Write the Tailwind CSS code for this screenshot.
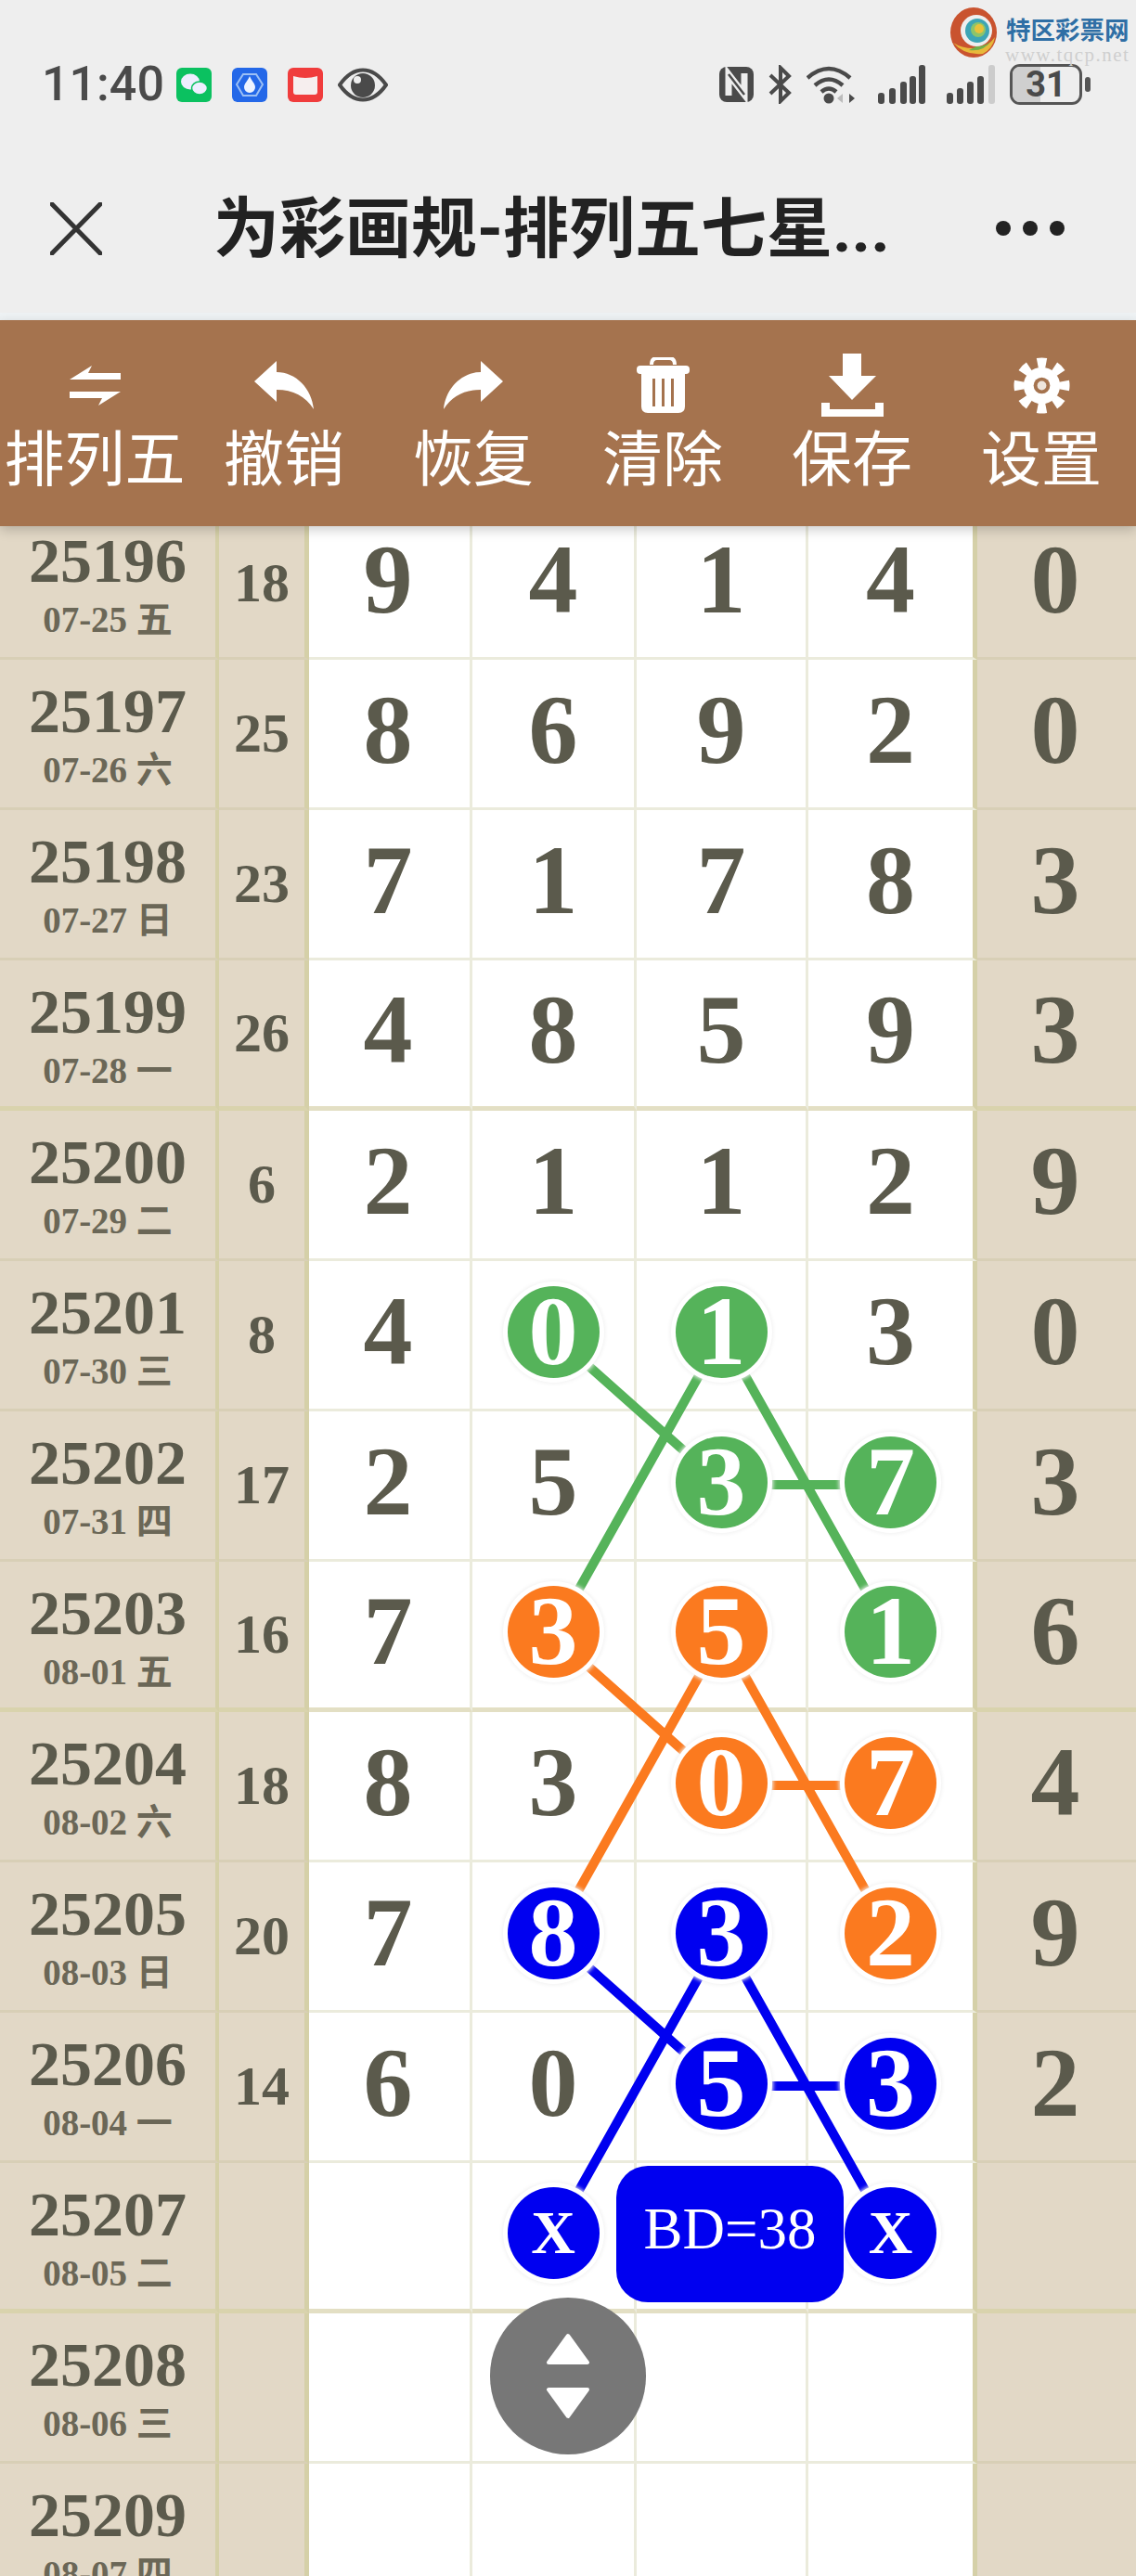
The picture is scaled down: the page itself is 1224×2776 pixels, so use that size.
<!DOCTYPE html>
<html lang="zh-CN">
<head>
    <meta charset="UTF-8" />
    <meta name="viewport" content="width=device-width, initial-scale=1.0" />
    <title>为彩画规-排列五七星</title>
    <script src="https://cdn.jsdelivr.net/npm/@tailwindcss/browser@4"></script>
</head>

<body class="relative w-[1224px] h-[2776px] overflow-hidden bg-white font-['Liberation_Serif','Noto_Sans_CJK_SC',serif]">
    <!-- Status bar + title -->
    <div class="h-[337px] bg-[#eeeeee] pt-[69px] font-['Roboto','Noto_Sans_CJK_SC',sans-serif]">
        <div class="flex items-center justify-between h-[44px] pl-[45px] pr-[49px]">
            <div class="flex items-center">
                <span class="w-[145px] text-[52px] leading-none font-medium text-[#4a4a4a]">11:40</span>
                <svg class="w-[38px] h-[37px]" viewBox="0 0 38 37"><rect width="38" height="37" rx="6" fill="#0bc160"/><ellipse cx="15" cy="15" rx="10" ry="8.5" fill="#eef"/><ellipse cx="25" cy="22" rx="8.5" ry="7" fill="#eef" stroke="#0bc160" stroke-width="1.5"/></svg>
                <svg class="w-[38px] h-[37px] ml-[22px]" viewBox="0 0 38 37"><rect width="38" height="37" rx="6" fill="#2468e8"/><path d="M12 7H26L33 18L26 30H12L5 18Z" fill="none" stroke="#9cc0f5" stroke-width="2"/><path d="M19 9C21 14 25 17 25 21A6 6 0 0 1 13 21C13 17 17 14 19 9Z" fill="#eef4ff"/></svg>
                <svg class="w-[38px] h-[37px] ml-[22px]" viewBox="0 0 38 37"><rect width="38" height="37" rx="6" fill="#f03c3c"/><path d="M6 9Q19 13 32 9V26Q32 29 29 29H9Q6 29 6 26Z" fill="#f6eeee"/></svg>
                <svg class="w-[54px] h-[37px] ml-[16px]" viewBox="0 0 54 37"><path d="M2 18.5C10 7 18 2.5 27 2.5S44 7 52 18.5C44 30 36 34.500 27 34.500S10 30 2 18.5Z" fill="none" stroke="#4a4a4a" stroke-width="4"/><circle cx="27" cy="19" r="13" fill="#4a4a4a"/><circle cx="21" cy="13" r="4" fill="#eeeeee"/></svg>
            </div>
            <div class="flex items-center">
                <svg class="w-[37px] h-[38px]" viewBox="0 0 37 38"><rect width="37" height="38" rx="8" fill="#4a4a4a"/><path d="M10 31V8L27 30V7" fill="none" stroke="#eeeeee" stroke-width="7"/><path d="M10 8L27 30" stroke="#4a4a4a" stroke-width="2.500"/></svg>
                <svg class="w-[25px] h-[42px] ml-[16px]" viewBox="0 0 25 42"><path d="M2 11L22 30L13 39V3L22 12L2 31" fill="none" stroke="#4a4a4a" stroke-width="4"/></svg>
                <svg class="w-[53px] h-[42px] ml-[16px]" viewBox="0 0 53 42"><path d="M1 14Q24 -6 47 14M9 22Q24 9 39 22M16 29Q24 22 32 29" fill="none" stroke="#4a4a4a" stroke-width="4.500"/><circle cx="24" cy="36" r="5.500" fill="#4a4a4a"/><path d="M33 36L39 31V41Z" fill="#bbbbbb"/><path d="M46 31L52 36L46 41Z" fill="#4a4a4a"/></svg>
                <svg class="w-[51px] h-[42px] ml-[24px]" viewBox="0 0 51 42"><g fill="#4a4a4a"><rect x="0" y="30" width="7" height="12" rx="3"/><rect x="12" y="25" width="7" height="17" rx="3"/><rect x="24" y="18" width="7" height="24" rx="3"/><rect x="44" y="0" width="7" height="42" rx="3"/><rect x="34" y="12" width="7" height="30" rx="3"/></g></svg>
                <svg class="w-[52px] h-[42px] ml-[23px]" viewBox="0 0 52 42"><g fill="#4a4a4a"><rect x="0" y="30" width="7" height="12" rx="3"/><rect x="11" y="25" width="7" height="17" rx="3"/><rect x="22" y="18" width="7" height="24" rx="3"/><rect x="33" y="12" width="7" height="30" rx="3"/></g><rect x="45" y="0" width="7" height="42" rx="3" fill="#cccccc"/></svg>
                <div class="relative flex items-center justify-center w-[78px] h-[44px] ml-[16px] rounded-[11px] border-[3px] border-[#555555] overflow-hidden">
                    <div class="absolute left-0 top-0 bottom-0 w-[30px] bg-[#cfcfcf]"></div>
                    <span class="relative text-[38px] leading-none font-bold text-[#4a4a4a]">31</span>
                </div>
                <div class="w-[6px] h-[16px] ml-[3px] rounded-full bg-[#555555]"></div>
            </div>
        </div>
        <div class="flex items-center mt-[97px] h-[72px]">
            <svg class="w-[56px] h-[57px] ml-[54px]" viewBox="0 0 56 57"><path d="M2 2L54 55M54 2L2 55" stroke="#333333" stroke-width="5" stroke-linecap="round"/></svg>
            <div class="ml-[120px] w-[843px] text-[71px] leading-none font-bold text-[#222222] whitespace-nowrap">为彩画规-排列五七星...</div>
            <div class="flex gap-[13px]">
                <div class="w-[16px] h-[16px] rounded-full bg-[#222222]"></div>
                <div class="w-[16px] h-[16px] rounded-full bg-[#222222]"></div>
                <div class="w-[16px] h-[16px] rounded-full bg-[#222222]"></div>
            </div>
        </div>
    </div>
    <div class="h-[8px] bg-[#eef2f4]"></div>

    <!-- Toolbar -->
    <div class="relative z-20 grid grid-cols-6 h-[222px] pt-[36px] bg-[#a5734e] text-white text-[65px] leading-none font-['Noto_Sans_CJK_SC',sans-serif] shadow-[0_4px_12px_rgba(0,0,0,0.2)]">
        <div class="flex flex-col items-center">
            <div class="flex items-center h-[68px]"><svg class="w-[55px] h-[43px]" viewBox="0 0 55 43"><path d="M0 15L24 0L20 8H55V15ZM0 28H55L31 43L35 35H0Z" fill="white"/></svg></div>
            <span class="mt-[9px] whitespace-nowrap">排列五</span>
        </div>
        <div class="flex flex-col items-center">
            <div class="flex items-center h-[68px]"><svg class="w-[64px] h-[52px]" viewBox="0 0 64 52"><path d="M0 22L24 0V12C45 12 62 30 64 52C55 38 42 31 24 31V44Z" fill="white"/></svg></div>
            <span class="mt-[9px] whitespace-nowrap">撤销</span>
        </div>
        <div class="flex flex-col items-center">
            <div class="flex items-center h-[68px]"><svg class="w-[64px] h-[52px] -scale-x-100" viewBox="0 0 64 52"><path d="M0 22L24 0V12C45 12 62 30 64 52C55 38 42 31 24 31V44Z" fill="white"/></svg></div>
            <span class="mt-[9px] whitespace-nowrap">恢复</span>
        </div>
        <div class="flex flex-col items-center">
            <div class="flex items-center h-[68px]"><svg class="w-[57px] h-[60px]" viewBox="0 0 57 60"><path d="M16 8Q16 1 22 1H35Q41 1 41 8" fill="none" stroke="white" stroke-width="4"/><rect x="0" y="9" width="57" height="9" rx="4" fill="white"/><path d="M5 18H52V53Q52 60 45 60H12Q5 60 5 53Z" fill="white"/><rect x="17" y="23" width="3" height="30" fill="#a5734e"/><rect x="27" y="23" width="3" height="30" fill="#a5734e"/><rect x="37" y="23" width="3" height="30" fill="#a5734e"/></svg></div>
            <span class="mt-[9px] whitespace-nowrap">清除</span>
        </div>
        <div class="flex flex-col items-center">
            <div class="flex items-center h-[68px]"><svg class="w-[67px] h-[68px]" viewBox="0 0 67 68"><path d="M23 0H43V24H59L33 50L8 24H23Z" fill="white"/><path d="M0 53H9V60H58V53H67V68H0Z" fill="white"/></svg></div>
            <span class="mt-[9px] whitespace-nowrap">保存</span>
        </div>
        <div class="flex flex-col items-center">
            <div class="flex items-center h-[68px]"><svg class="w-[61px] h-[61px]" viewBox="-31 -31 62 62"><circle r="20" fill="white"/><circle r="25" fill="none" stroke="white" stroke-width="11" pathLength="16" stroke-dasharray="1 1" stroke-dashoffset="0.500"/><circle r="9" fill="#a5734e"/><circle r="5" fill="#eee5dc"/></svg></div>
            <span class="mt-[9px] whitespace-nowrap">设置</span>
        </div>
    </div>

    <!-- Chart rows, filled in below -->
    <div id="chart" class="-mt-[18px]"></div>

    <!-- Connecting lines -->
    <svg class="absolute top-0 left-0 w-[1224px] h-[2776px]" viewBox="0 0 1224 2776" stroke-width="10" fill="none">
        <g stroke="#55b35a">
            <path d="M596 1438L778 1600M778 1438L596 1762M778 1438L960 1762M778 1600H960" />
        </g>
        <g stroke="#fb7a1f">
            <path d="M596 1762L778 1924M778 1762L596 2086M778 1762L960 2086M778 1924H960" />
        </g>
        <g stroke="#0000f0">
            <path d="M596 2086L778 2248M778 2086L596 2410M778 2086L960 2410M778 2248H960" />
        </g>
    </svg>

    <div class="absolute left-[664px] top-[2334px] z-20 flex justify-center w-[245px] h-[147px] pt-[37px] rounded-[34px] bg-[#0000f0] text-white text-[63px] leading-none">BD=38</div>

    <div class="absolute left-[528px] top-[2476px] z-30 flex items-center justify-center w-[168px] h-[169px] rounded-full bg-[#777777]">
        <svg class="w-[48px] h-[93px]" viewBox="0 0 48 93"><path d="M24 3L45 32H3ZM3 61H45L24 90Z" fill="white" stroke="white" stroke-width="4" stroke-linejoin="round"/></svg>
    </div>

    <script>
        const rows = [
            ['25196', '07-25 五', '18', '9', '4', '1', '4', '0'],
            ['25197', '07-26 六', '25', '8', '6', '9', '2', '0'],
            ['25198', '07-27 日', '23', '7', '1', '7', '8', '3'],
            ['25199', '07-28 一', '26', '4', '8', '5', '9', '3'],
            ['25200', '07-29 二', '6', '2', '1', '1', '2', '9'],
            ['25201', '07-30 三', '8', '4', '0g', '1g', '3', '0'],
            ['25202', '07-31 四', '17', '2', '5', '3g', '7g', '3'],
            ['25203', '08-01 五', '16', '7', '3o', '5o', '1g', '6'],
            ['25204', '08-02 六', '18', '8', '3', '0o', '7o', '4'],
            ['25205', '08-03 日', '20', '7', '8b', '3b', '2o', '9'],
            ['25206', '08-04 一', '14', '6', '0', '5b', '3b', '2'],
            ['25207', '08-05 二', '', '', 'Xb', '', 'Xb', ''],
            ['25208', '08-06 三', '', '', '', '', '', ''],
            ['25209', '08-07 四', '', '', '', '', '', '']
        ];
        const dots = {
            g: 'bg-[#55b35a]',
            o: 'bg-[#fb7a1f]',
            b: 'bg-[#0000f0]'
        };

        function ball(v) {
            if (v.length < 2) return v;
            const size = v[0] === 'X' ? 'text-[66px]' : 'text-[106px]';
            return `<div class="relative z-10 flex items-center justify-center w-[99px] h-[99px] rounded-full text-white ${size} ${dots[v[1]]} shadow-[0_0_0_5px_#ffffff,0_0_4px_6px_#f1f1f1]">${v[0]}</div>`;
        }

        document.getElementById('chart').innerHTML = rows.map((r, i) => {
            const thick = i % 4 === 3;
            const tan = thick ? 'border-b-[5px] border-b-[#d9d3ad]' : 'border-b-[3px] border-b-[#d8cfb6]';
            const white = thick ? 'border-b-[5px] border-b-[#e3dfc4]' : 'border-b-[3px] border-b-[#ebebdc]';
            const num = 'flex items-center justify-center pb-[7px] text-[106px] leading-none font-bold text-[#5b5a4c]';
            return `<div class="flex h-[162px]">
                <div class="w-[236px] flex flex-col items-center pt-[21px] bg-[#e2d8c6] border-r-[4px] border-r-[#d5d0a8] ${tan} font-bold">
                    <div class="text-[68px] leading-none text-[#5b5a4c]">${r[0]}</div>
                    <div class="mt-[10px] text-[39px] leading-none text-[#6b6757]">${r[1]}</div>
                </div>
                <div class="w-[97px] flex items-center justify-center pb-[2px] bg-[#e2d8c6] border-r-[5px] border-r-[#d5d0a8] ${tan} text-[60px] leading-none font-bold text-[#5b5a4c]">${r[2]}</div>
                <div class="w-[176px] pr-[3px] border-r-[3px] border-r-[#ebebdc] ${white} ${num}">${r[3]}</div>
                <div class="w-[177px] border-r-[3px] border-r-[#ebebdc] ${white} ${num}">${ball(r[4])}</div>
                <div class="w-[185px] border-r-[3px] border-r-[#ebebdc] ${white} ${num}">${ball(r[5])}</div>
                <div class="w-[182px] border-r-[5px] border-r-[#d5d0a8] ${white} ${num}">${ball(r[6])}</div>
                <div class="w-[171px] pr-[3px] bg-[#e2d8c6] ${tan} ${num}">${r[7]}</div>
            </div>`;
        }).join('');
    </script>

    <!-- Watermark over the status bar -->
    <div class="absolute left-[1024px] top-[8px] z-40 flex items-start">
        <svg class="w-[50px] h-[54px]" viewBox="0 0 50 54">
            <ellipse cx="25" cy="27" rx="25" ry="27" fill="#c9532f"/>
            <path d="M3 38Q15 52 35 50Q46 44 48 32Q40 44 25 44Q12 44 3 38Z" fill="#e8b93a"/>
            <path d="M20 46Q36 48 44 36Q38 42 28 42Z" fill="#6fb04a"/>
            <circle cx="28" cy="25" r="17" fill="#eeeeee"/>
            <circle cx="29" cy="25" r="13" fill="#3da5b5"/>
            <circle cx="30" cy="24" r="8" fill="#8cc46a"/>
            <circle cx="31" cy="23" r="5" fill="#e8c23a"/>
        </svg>
        <div class="ml-[9px] flex flex-col items-center">
            <div class="mt-[10px] text-[26.500px] leading-none font-bold text-[#2f6fa5] font-['Noto_Sans_CJK_SC',sans-serif] whitespace-nowrap">特区彩票网</div>
            <div class="mt-[4px] text-[21px] leading-none tracking-[1.500px] text-[#cfcfcf] whitespace-nowrap">www.tqcp.net</div>
        </div>
    </div>
</body>
</html>
